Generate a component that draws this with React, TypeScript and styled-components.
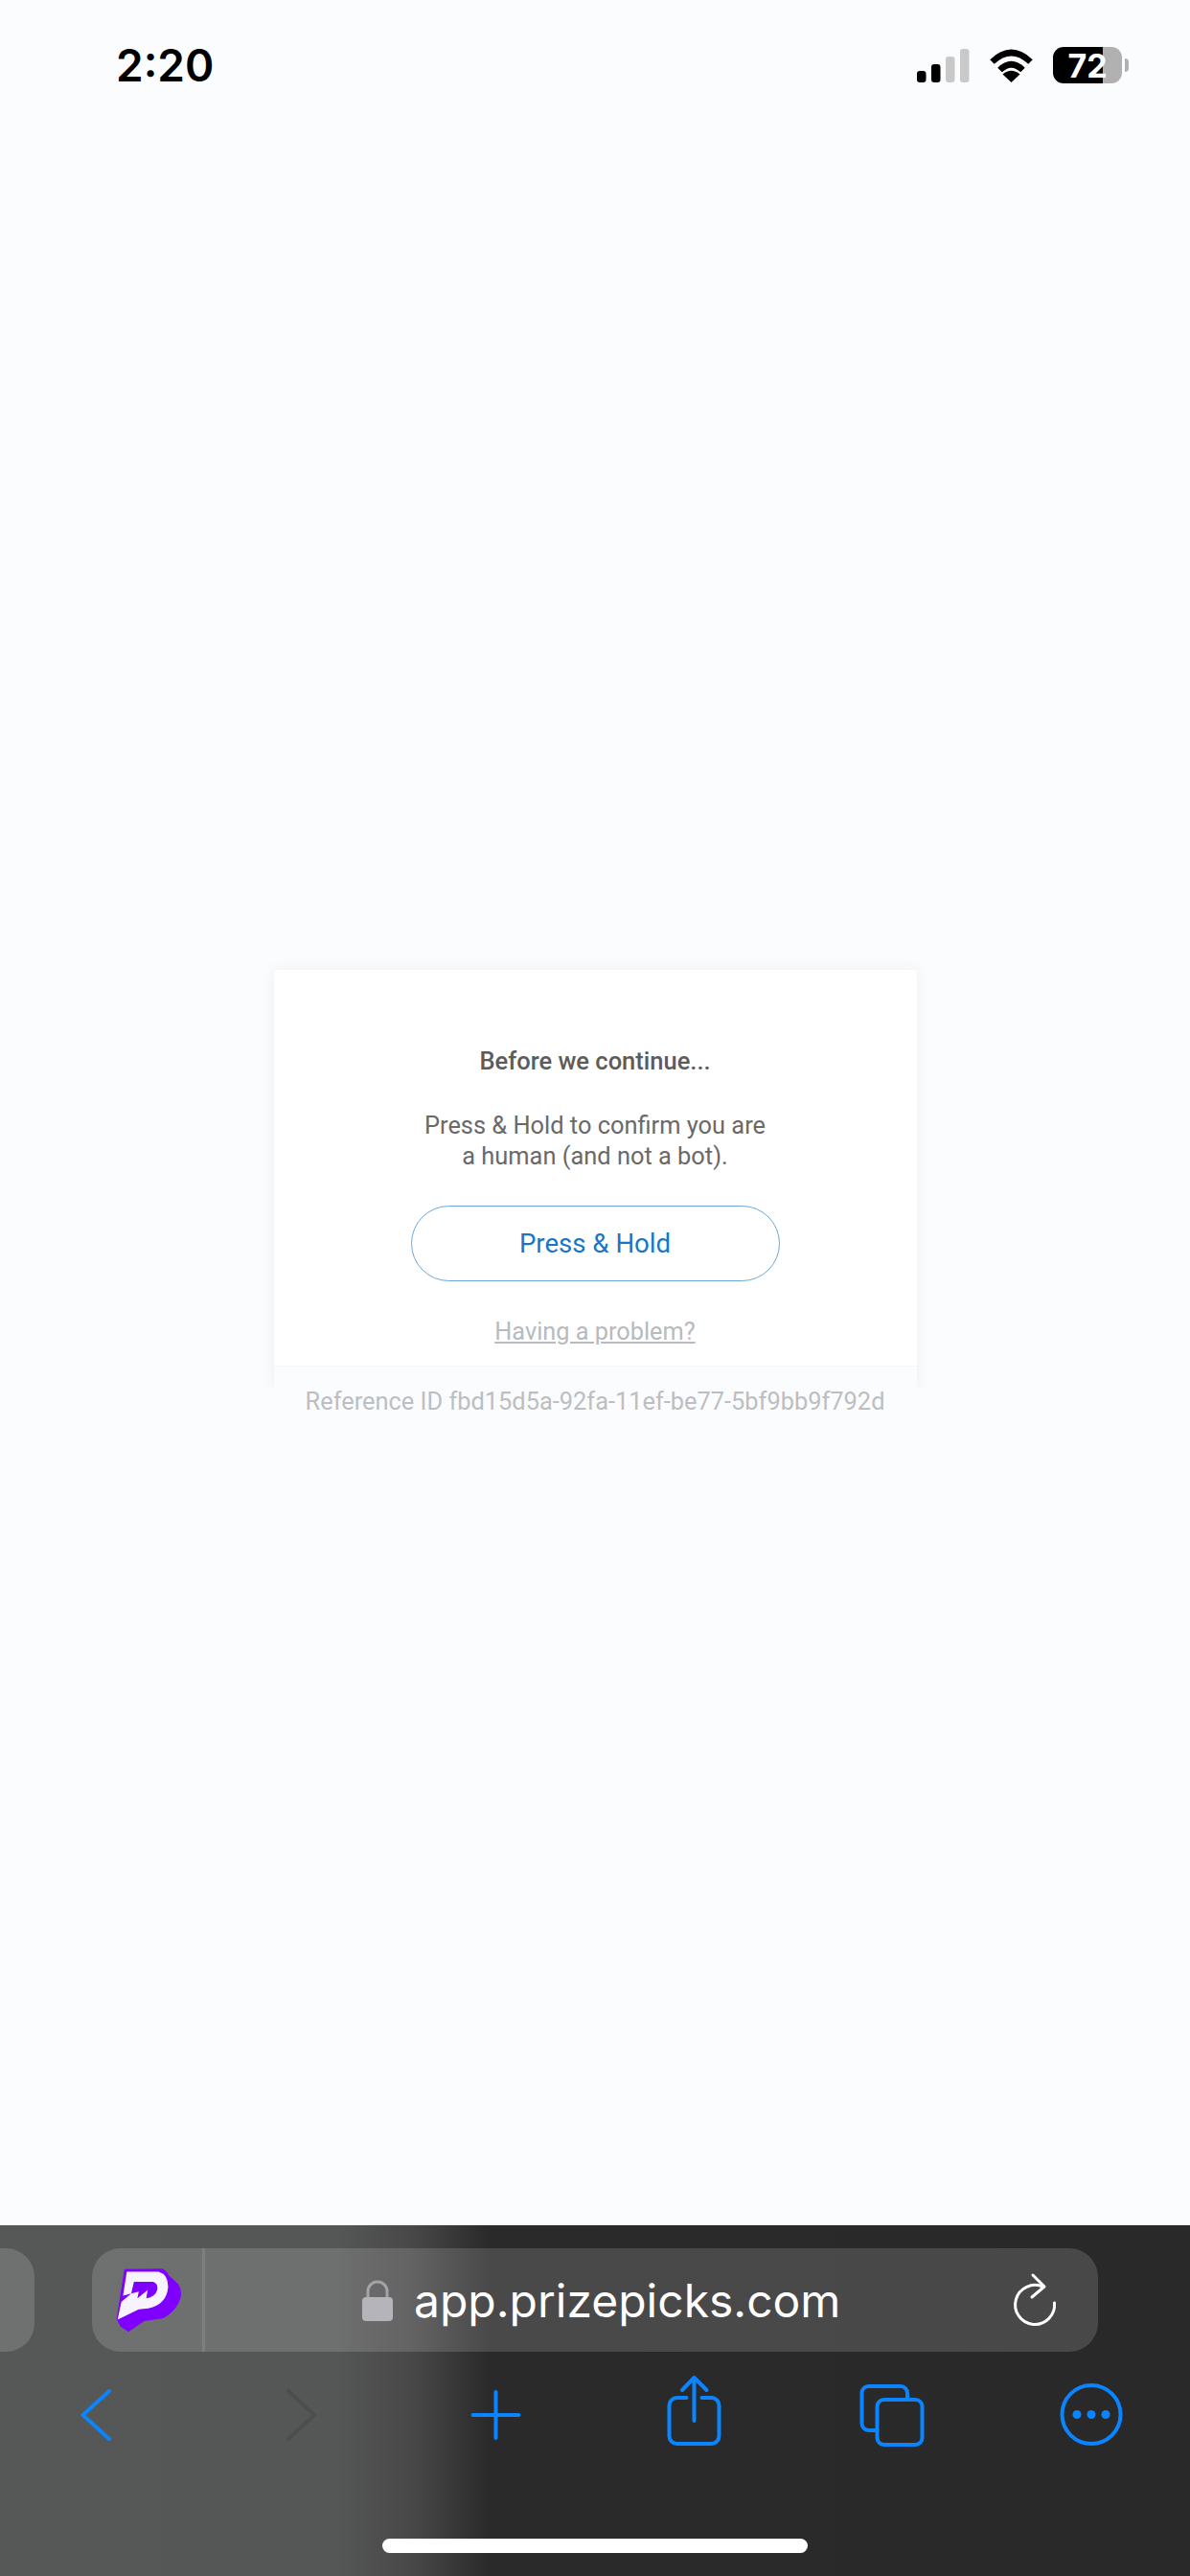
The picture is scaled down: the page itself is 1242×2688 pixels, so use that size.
import React from 'react';
import styled, { createGlobalStyle } from 'styled-components';

const GlobalStyle = createGlobalStyle`
  html, body {
    margin: 0;
    padding: 0;
    background: #fbfcfe;
  }
`;

const App: React.FC = () => {
  return (
    <Page>
      <GlobalStyle />
      <StatusBar>
        <Clock>2:20</Clock>
        <StatusIcons>
          <svg width="55" height="35" viewBox="0 0 55 35">
            <rect x="0" y="23" width="9.5" height="12" rx="3" fill="#000" />
            <rect x="15" y="16" width="9.5" height="19" rx="3" fill="#000" />
            <rect x="30" y="8" width="9.5" height="27" rx="3" fill="#c9c9c9" />
            <rect x="45" y="0" width="9.5" height="35" rx="3" fill="#c9c9c9" />
          </svg>
          <svg width="47" height="36" viewBox="0 0 47 36" fill="none">
            <path d="M3.5 14.5Q23.5 -4.5 43.5 14.5" stroke="#000" strokeWidth="6.5" />
            <path d="M11.5 23Q23.5 11.5 35.5 23" stroke="#000" strokeWidth="6.5" />
            <path d="M23.5 36L14.5 27.5Q23.5 20 32.5 27.5Z" fill="#000" />
          </svg>
          <Battery>
            <BatteryBody>72</BatteryBody>
            <BatteryTip />
          </Battery>
        </StatusIcons>
      </StatusBar>

      <Main>
        <Card>
          <CardContent>
            <Title>Before we continue...</Title>
            <Message>
              Press &amp; Hold to confirm you are
              <br />
              a human (and not a bot).
            </Message>
            <HoldButton>Press &amp; Hold</HoldButton>
            <ProblemLink>Having a problem?</ProblemLink>
          </CardContent>
          <CardFooter />
        </Card>
        <ReferenceId>Reference ID fbd15d5a-92fa-11ef-be77-5bf9bb9f792d</ReferenceId>
      </Main>

      <BrowserBar>
        <TabRow>
          <TabStub />
          <AddressPill>
            <Favicon>
              <svg width="69" height="67" viewBox="98 116 192 188">
                <path
                  d="M122 118L232 117Q245 122 252 136L280 162Q292 180 286 204Q276 240 236 262L180 270L134 302L110 286L99 264Z"
                  fill="#7f00ff"
                />
                <path
                  d="M129 126L222 126Q250 134 250 170Q246 222 192 233L164 236L102 266L113 214L142 190L118 196Z"
                  fill="#f8f4ff"
                />
                <path
                  d="M150 155L206 155Q222 160 218 180Q212 200 186 204L190 180L160 204L164 184L142 190Z"
                  fill="#7f00ff"
                />
              </svg>
            </Favicon>
            <Address>
              <svg width="32" height="43" viewBox="0 0 32 43" fill="none">
                <path d="M6 19V12a10 10 0 0 1 20 0V19" stroke="#a3a3a8" strokeWidth="3" />
                <rect x="0" y="18" width="32" height="25" rx="4" fill="#b5b4ba" />
              </svg>
              <AddressText>app.prizepicks.com</AddressText>
              <Reload>
                <svg width="50" height="60" viewBox="0 0 50 60" fill="none" stroke="#fff" strokeWidth="3" strokeLinecap="round" strokeLinejoin="round">
                  <path d="M33 16.5A20.5 20.5 0 1 0 44.5 33" />
                  <path d="M22 4L34 16L21 27" />
                </svg>
              </Reload>
            </Address>
          </AddressPill>
        </TabRow>

        <Toolbar>
          <ToolIcon>
            <path d="M60 25L32.5 50L60 75" />
          </ToolIcon>
          <ToolIcon $disabled>
            <path d="M40 25L67 50L40 75" />
          </ToolIcon>
          <ToolIcon>
            <path d="M25.5 50H73.5M49.5 26V74" />
          </ToolIcon>
          <ToolIcon>
            <path d="M41.5 32H31.5a8 8 0 0 0 -8 8V72a8 8 0 0 0 8 8H67.5a8 8 0 0 0 8 -8V40a8 8 0 0 0 -8 -8H57.5" />
            <path d="M49.5 56V12M37 24L49.5 11L62.5 24" />
          </ToolIcon>
          <ToolIcon>
            <rect x="33.5" y="34" width="47" height="47" rx="7" />
            <path d="M65 34V27a7 7 0 0 0 -7 -7H24.5a7 7 0 0 0 -7 7V59a7 7 0 0 0 7 7H33.5" />
          </ToolIcon>
          <ToolIcon>
            <circle cx="50" cy="49.5" r="30.5" />
            <circle cx="35" cy="49.5" r="4.5" fill="#0a84ff" stroke="none" />
            <circle cx="50" cy="49.5" r="4.5" fill="#0a84ff" stroke="none" />
            <circle cx="65" cy="49.5" r="4.5" fill="#0a84ff" stroke="none" />
          </ToolIcon>
        </Toolbar>

        <HomeIndicator />
      </BrowserBar>
    </Page>
  );
};

export default App;

type ToolIconProps = {
  $disabled?: boolean;
  children?: React.ReactNode;
};

const ToolIcon: React.FC<ToolIconProps> = ({ $disabled, children }) => (
  <ToolSvg $disabled={$disabled} viewBox="0 0 100 100">
    {children}
  </ToolSvg>
);

const Page = styled.div`
  display: flex;
  flex-direction: column;
  width: 1242px;
  height: 2688px;
  overflow: hidden;
  background: #fbfcfe;
  font-family: Roboto, "Liberation Sans", sans-serif;
`;

const StatusBar = styled.div`
  display: flex;
  align-items: center;
  justify-content: space-between;
  height: 136px;
  padding: 0 64px 0 121px;
  box-sizing: border-box;
`;

const Clock = styled.div`
  font-family: Inter, "Liberation Sans", sans-serif;
  font-size: 46px;
  font-weight: 600;
  color: #000;
`;

const StatusIcons = styled.div`
  display: flex;
  align-items: center;
  gap: 20px;
`;

const Battery = styled.div`
  display: flex;
  align-items: center;
  gap: 3px;
`;

const BatteryBody = styled.div`
  display: flex;
  align-items: center;
  justify-content: center;
  width: 72px;
  height: 38px;
  border-radius: 11px;
  background: linear-gradient(90deg, #000 0, #000 52px, #b0b1b0 52px);
  color: #fff;
  font-family: Inter, "Liberation Sans", sans-serif;
  font-size: 34px;
  font-weight: 700;
`;

const BatteryTip = styled.div`
  width: 4px;
  height: 14px;
  border-radius: 0 7px 7px 0;
  background: #b0b1b0;
`;

const Main = styled.main`
  display: flex;
  flex: 1;
  flex-direction: column;
  align-items: center;
  padding-top: 876px;
`;

const Card = styled.div`
  width: 671px;
  border-radius: 4px 4px 0 0;
  background: #fff;
  box-shadow: 0 0 14px rgba(40, 50, 70, 0.07);
  clip-path: inset(-20px -20px 0 -20px);
`;

const CardContent = styled.div`
  display: flex;
  flex-direction: column;
  align-items: center;
  padding: 79px 0 20px;
`;

const Title = styled.div`
  font-size: 25.5px;
  font-weight: 500;
  line-height: 32px;
  color: #5c5c5c;
`;

const Message = styled.div`
  margin-top: 35px;
  font-size: 25.4px;
  line-height: 32px;
  text-align: center;
  color: #696969;
`;

const HoldButton = styled.div`
  display: flex;
  align-items: center;
  justify-content: center;
  width: 385px;
  height: 79px;
  margin-top: 36px;
  box-sizing: border-box;
  border: 1.5px solid #6ba6da;
  border-radius: 40px;
  font-size: 27.6px;
  color: #1a76c4;
`;

const ProblemLink = styled.div`
  margin-top: 38px;
  font-size: 25.3px;
  line-height: 30px;
  color: #b8babd;
  text-decoration: underline;
`;

const CardFooter = styled.div`
  height: 23px;
  border-top: 1px solid #f5f6f8;
  box-sizing: border-box;
  background: #fbfcfe;
`;

const ReferenceId = styled.div`
  font-size: 25.4px;
  line-height: 28px;
  color: #bcbec2;
`;

const BrowserBar = styled.div`
  height: 366px;
  padding-top: 24px;
  box-sizing: border-box;
  background: linear-gradient(90deg, #565857 0, #555756 350px, #474847 430px, #2a2a2a 510px, #292929 100%);
`;

const TabRow = styled.div`
  display: flex;
  gap: 60px;
  height: 108px;
`;

const TabStub = styled.div`
  width: 36px;
  border-radius: 0 30px 30px 0;
  background: rgba(255, 255, 255, 0.15);
`;

const AddressPill = styled.div`
  display: flex;
  width: 1050px;
  border-radius: 30px;
  background: rgba(255, 255, 255, 0.15);
`;

const Favicon = styled.div`
  display: flex;
  align-items: center;
  width: 118px;
  padding-left: 25px;
  box-sizing: border-box;
  border-right: 3px solid rgba(255, 255, 255, 0.1);
`;

const Address = styled.div`
  display: flex;
  flex: 1;
  align-items: center;
  gap: 22px;
  padding: 0 40px 0 164px;
`;

const AddressText = styled.div`
  font-family: Inter, "Liberation Sans", sans-serif;
  font-size: 48px;
  font-weight: 400;
  color: #fff;
  white-space: nowrap;
`;

const Reload = styled.div`
  display: flex;
  margin-left: auto;
`;

const Toolbar = styled.div`
  display: grid;
  grid-template-columns: repeat(6, 207px);
  justify-items: center;
  margin-top: 16px;
`;

const ToolSvg = styled.svg<{ $disabled?: boolean }>`
  width: 100px;
  height: 100px;
  fill: none;
  stroke: ${({ $disabled }) => ($disabled ? '#4c4e4d' : '#0a84ff')};
  stroke-width: 4;
  stroke-linecap: round;
  stroke-linejoin: round;
`;

const HomeIndicator = styled.div`
  width: 444px;
  height: 15px;
  margin: 79px auto 0;
  border-radius: 8px;
  background: #fff;
`;
